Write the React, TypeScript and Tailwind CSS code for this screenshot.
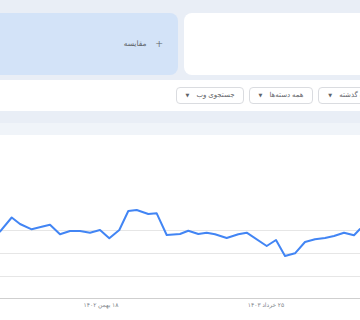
import React from "react";

const points: [number, number][] = [
  [0, 231.5], [11.7, 217.5], [20, 224], [31.7, 229.3], [41.7, 226.7], [50, 224.7],
  [60, 234.3], [70, 231], [80, 231], [90, 232.7], [100, 230], [109.3, 238.3],
  [119.3, 230], [128.3, 211], [136.7, 210], [148.3, 214], [156.7, 213.3],
  [166.7, 235], [180, 234], [188.3, 230.7], [198.3, 234], [206.7, 232.7],
  [215, 234.3], [226.7, 238], [238.3, 234.3], [246.7, 232.7], [266.7, 246],
  [276, 240], [285, 256], [295, 253.3], [305, 242], [315, 239.3], [325, 238],
  [334, 236], [344, 232.7], [354, 235.3], [360, 229],
];

const Chip = ({ label, w }: { label: string; w: string }) => (
  <div
    className={`${w} h-[17px] shrink-0 flex items-center justify-center gap-[7px] border border-[#dadce0] rounded-[4px] bg-white text-[7px] text-[#5f6368] whitespace-nowrap overflow-hidden`}
  >
    <span>{label}</span>
    <span className="text-[5px] text-[#5f6368]">▼</span>
  </div>
);

const App = () => {
  // chart area starts at y = 135
  const top = 135;
  const line = points.map(([x, y]) => `${x},${y - top}`).join(" ");

  return (
    <div
      dir="rtl"
      className="w-[360px] h-[320px] overflow-hidden bg-white"
      style={{ fontFamily: '"Noto Sans", "DejaVu Sans", sans-serif' }}
    >
      {/* Header cards */}
      <div className="h-[80px] bg-[#e9eef6] pt-[13px] overflow-hidden">
        <div className="flex gap-[6px] w-[400px] mr-[-24px] h-[62px]">
          <div className="w-[200px] bg-white rounded-[8px]" />
          <div className="w-[194px] bg-[#d3e3f8] rounded-[8px] flex items-center pr-[15px] gap-[9px] text-[#5f6368]">
            <span className="text-[13px] leading-none font-light">+</span>
            <span className="text-[7.5px]">مقایسه</span>
          </div>
        </div>
      </div>

      {/* Filters */}
      <div className="h-[31px] overflow-hidden">
        <div className="flex gap-[5px] w-[400px] mr-[-29px] pt-[7px]">
          <Chip label="۱۲ ماه گذشته" w="w-[71px]" />
          <Chip label="همه دسته‌ها" w="w-[64px]" />
          <Chip label="جستجوی وب" w="w-[68px]" />
        </div>
      </div>

      {/* Section bands */}
      <div className="h-[12px] bg-[#e9eef6]" />
      <div className="h-[12px] bg-[#f0f4f9]" />

      {/* Chart */}
      <svg width="360" height="185" className="block">
        <line x1="0" x2="360" y1={230.5 - top} y2={230.5 - top} stroke="#e6e6e6" strokeWidth="1" />
        <line x1="0" x2="360" y1={253.5 - top} y2={253.5 - top} stroke="#e6e6e6" strokeWidth="1" />
        <line x1="0" x2="360" y1={276.5 - top} y2={276.5 - top} stroke="#e6e6e6" strokeWidth="1" />
        <line x1="0" x2="360" y1={298.5 - top} y2={298.5 - top} stroke="#cfcfcf" strokeWidth="1" />
        <polyline
          points={line}
          fill="none"
          stroke="#4285f4"
          strokeWidth="2"
          strokeLinejoin="round"
          strokeLinecap="round"
        />
        <text x="101" y={306.5 - top} textAnchor="middle" fontSize="6" fill="#80868b" direction="rtl">
          ۱۸ بهمن ۱۴۰۲
        </text>
        <text x="266" y={306.5 - top} textAnchor="middle" fontSize="6" fill="#80868b" direction="rtl">
          ۲۵ خرداد ۱۴۰۳
        </text>
      </svg>
    </div>
  );
};

export default App;
